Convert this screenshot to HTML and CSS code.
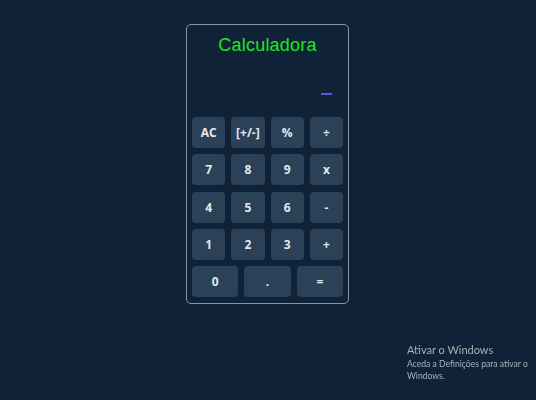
FILE: index.html
```html
<!DOCTYPE html>
<html lang="pt">
<head>
<meta charset="utf-8">
<title>Calculadora</title>
<link rel="stylesheet" href="styles.css">
</head>
<body>
<main class="calc">
  <h1 class="title">Calculadora</h1>
  <div class="display"><span class="cursor"></span></div>
  <div class="keys">
    <button class="key">AC</button>
    <button class="key">[+/-]</button>
    <button class="key">%</button>
    <button class="key">÷</button>
    <button class="key">7</button>
    <button class="key">8</button>
    <button class="key">9</button>
    <button class="key">x</button>
    <button class="key">4</button>
    <button class="key">5</button>
    <button class="key">6</button>
    <button class="key">-</button>
    <button class="key">1</button>
    <button class="key">2</button>
    <button class="key">3</button>
    <button class="key">+</button>
  </div>
  <div class="keys last">
    <button class="key">0</button>
    <button class="key">.</button>
    <button class="key">=</button>
  </div>
</main>
<aside class="watermark">
  <div class="wm-title">Ativar o Windows</div>
  <div class="wm-text">Aceda a Definições para ativar o<br>Windows.</div>
</aside>
</body>
</html>
```
FILE: styles.css
```css
html, body {
  margin: 0;
  padding: 0;
  height: 100%;
}
body {
  background: #0f2237;
  font-family: "Open Sans", "Noto Sans", sans-serif;
  display: flex;
  justify-content: center;
  align-items: flex-start;
}
.calc {
  margin-top: 24px;
  margin-right: 1px;
  width: 163px;
  box-sizing: border-box;
  border: 1px solid #8795a3;
  border-radius: 5px;
  padding: 5px 5px 6px 5px;
  display: flex;
  flex-direction: column;
}
.title {
  margin: 4px 0 0 0;
  text-align: center;
  font-family: "Liberation Sans", Arial, sans-serif;
  font-weight: normal;
  font-size: 18px;
  line-height: 22px;
  color: #1ee81a;
  letter-spacing: 0.2px;
}
.display {
  height: 61px;
  display: flex;
  justify-content: flex-end;
  align-items: flex-start;
  padding-right: 11px;
}
.cursor {
  display: block;
  margin-top: 37px;
  width: 11px;
  height: 2px;
  background: #5b55e8;
}
.keys {
  display: grid;
  grid-template-columns: repeat(4, 1fr);
  column-gap: 6px;
  row-gap: 6.3px;
}
.keys.last {
  margin-top: 6.3px;
  grid-template-columns: repeat(3, 1fr);
}
.key {
  height: 31px;
  border: none;
  border-radius: 4px;
  background: #2a4158;
  color: #e4e8ec;
  font-family: "Open Sans", "Noto Sans", sans-serif;
  font-weight: 700;
  font-size: 12px;
  padding: 0;
}
.watermark {
  position: fixed;
  left: 407px;
  top: 342px;
  color: #a9b1ba;
  font-family: Lato, "Open Sans", sans-serif;
  white-space: nowrap;
}
.wm-title {
  font-size: 11px;
  line-height: 16px;
}
.wm-text {
  font-size: 8.6px;
  line-height: 12px;
}
```
